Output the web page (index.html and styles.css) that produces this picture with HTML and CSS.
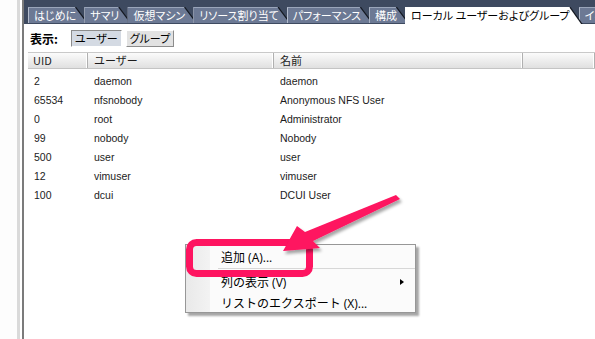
FILE: index.html
```html
<!DOCTYPE html>
<html lang="ja">
<head>
    <meta charset="UTF-8">
    <title>ローカル ユーザーおよびグループ</title>
    <link rel="stylesheet" href="styles.css">
</head>
<body>

    <div class="window">
        <!-- left pane edge -->
        <div class="sidebar"></div>

        <div class="main">
            <!-- tab strip -->
            <div class="tabbar">
                <div class="tab"><span class="face">はじめに</span></div>
                <div class="tab"><span class="face">サマリ</span></div>
                <div class="tab"><span class="face">仮想マシン</span></div>
                <div class="tab"><span class="face">リソース割り当て</span></div>
                <div class="tab"><span class="face">パフォーマンス</span></div>
                <div class="tab"><span class="face">構成</span></div>
                <div class="tab active"><span class="face">ローカル ユーザーおよびグループ</span></div>
                <div class="tab"><span class="face">イベ</span></div>
            </div>

            <div class="content">
                <div class="toolbar">
                    <span class="view-label">表示:</span>
                    <button class="view-btn pressed">ユーザー</button>
                    <button class="view-btn">グループ</button>
                </div>

                <div class="grid">
                    <div class="grid-head">
                        <div class="col">UID</div>
                        <div class="col">ユーザー</div>
                        <div class="col">名前</div>
                        <div class="col"></div>
                    </div>
                    <div class="grid-body">
                        <div class="row"><span>2</span><span>daemon</span><span>daemon</span></div>
                        <div class="row"><span>65534</span><span>nfsnobody</span><span>Anonymous NFS User</span></div>
                        <div class="row"><span>0</span><span>root</span><span>Administrator</span></div>
                        <div class="row"><span>99</span><span>nobody</span><span>Nobody</span></div>
                        <div class="row"><span>500</span><span>user</span><span>user</span></div>
                        <div class="row"><span>12</span><span>vimuser</span><span>vimuser</span></div>
                        <div class="row"><span>100</span><span>dcui</span><span>DCUI User</span></div>
                    </div>
                </div>
            </div>
        </div>

        <!-- right-click menu -->
        <div class="context-menu">
            <div class="menu-item">追加 (A)...</div>
            <div class="menu-sep"></div>
            <div class="menu-item">列の表示 (V)<i class="submenu-arrow"></i></div>
            <div class="menu-item">リストのエクスポート (X)...</div>
        </div>

        <!-- annotation: highlight box and arrow -->
        <svg class="annotation" width="595" height="339" viewBox="0 0 595 339">
            <defs>
                <filter id="shadow" x="-20%" y="-20%" width="140%" height="160%">
                    <feDropShadow dx="2" dy="3" stdDeviation="1.5" flood-color="#000" flood-opacity="0.35"/>
                </filter>
            </defs>
            <rect x="189.5" y="242.5" width="120" height="31" rx="7" fill="none" stroke="#fe1460" stroke-width="7"/>
            <polygon points="283,251 297,226 305,232 396,195 400,199 313,241 320,248" fill="#fe1460" filter="url(#shadow)"/>
        </svg>
    </div>

</body>
</html>
```

FILE: styles.css
```css
body {
    margin: 0;
    background: #fff;
    font-family: "Liberation Sans", Arial, "Noto Sans CJK JP", sans-serif;
}
.window {
    position: relative;
    display: flex;
    width: 595px;
    height: 339px;
    overflow: hidden;
}
.sidebar {
    width: 24px;
    flex-shrink: 0;
    background: linear-gradient(to right, #fdfdfd 0 17px, #dadada 17px 20px, #fff 20px 22px, #7b7b7b 22px 24px);
}
.main {
    flex: 1;
    min-width: 0;
}

/* tabs */
.tabbar {
    display: flex;
    align-items: flex-end;
    height: 24px;
    padding: 0 0 1px 4px;
    background: #3e4a60;
    box-sizing: border-box;
    white-space: nowrap;
    overflow: hidden;
}
.tab {
    position: relative;
    height: 16px;
    margin-right: -4px;
    background: #141820;
    clip-path: polygon(0 0, calc(100% - 12px) 0, 100% 100%, 0 100%);
    flex-shrink: 0;
}
.tab .face {
    display: block;
    height: 100%;
    box-sizing: border-box;
    padding: 0 12px 0 5px;
    background: #6c7994;
    border-top: 1px solid #9aa5ba;
    border-left: 1px solid #b3bccc;
    color: #fff;
    font-family: "Noto Sans CJK JP", sans-serif;
    font-size: 11px;
    font-feature-settings: "palt";
    line-height: 15px;
    clip-path: polygon(0 0, calc(100% - 13.5px) 0, calc(100% - 1.5px) 100%, 0 100%);
}
.tab.active {
    height: 17px;
    margin-bottom: -1px;
    z-index: 2;
}
.tab.active .face {
    padding-right: 13px;
    background: #fff;
    border-color: #fff;
    color: #000;
}

/* content */
.content {
    padding-left: 4px;
}
.toolbar {
    display: flex;
    align-items: center;
    height: 28px;
    padding-left: 2px;
}
.view-label {
    font-family: "Noto Sans CJK JP", sans-serif;
    font-weight: bold;
    font-size: 12px;
    margin-right: 13px;
}
.view-btn {
    height: 17px;
    padding: 0 3px;
    margin-right: 4px;
    font-family: "Noto Sans CJK JP", sans-serif;
    font-size: 11px;
    font-feature-settings: "palt";
    line-height: 13px;
    color: #000;
    background: #e2e2e2;
    border: 1px solid;
    border-color: #fff #8c8c8c #8c8c8c #fff;
}
.view-btn.pressed {
    background: #d4dae3;
    border-color: #8c8c8c #fff #fff #8c8c8c;
}

.grid {
    font-size: 10.5px;
    color: #1c1c1c;
}
.grid-head {
    display: grid;
    grid-template-columns: 60px 186px 249px 1fr;
    height: 17px;
    border-top: 1px solid #c9c9c9;
    border-bottom: 1px solid #c4c4c4;
    background: linear-gradient(#fbfbfb, #e0e0e0);
    box-sizing: border-box;
}
.grid-head .col {
    padding-left: 5px;
    border-right: 1px solid #b0b0b0;
    box-shadow: inset -1px 0 #fff;
    font-family: "Noto Sans CJK JP", sans-serif;
    font-size: 11px;
    line-height: 15px;
}
.grid-head .col:nth-child(2),
.grid-head .col:nth-child(3) {
    padding-left: 6px;
}
.grid-body {
    padding-top: 3px;
}
.row {
    display: grid;
    grid-template-columns: 60px 186px 249px;
    height: 19px;
    line-height: 19px;
}
.row span {
    padding-left: 6px;
}

/* context menu */
.context-menu {
    position: absolute;
    left: 185px;
    top: 244px;
    width: 231px;
    height: 69px;
    box-sizing: border-box;
    border: 1px solid #979797;
    background: linear-gradient(to right, #e9e9e9 0, #f3f3f3 24px, #fbfbfb 24px);
    box-shadow: 3px 3px 2px rgba(0, 0, 0, 0.35);
    font-family: "Open Sans", "Noto Sans CJK JP", sans-serif;
    font-size: 12px;
    color: #000;
}
.menu-item {
    display: flex;
    align-items: center;
    justify-content: space-between;
    height: 21px;
    padding: 0 11px 0 35px;
}
.menu-item:first-child {
    height: 23px;
}
.menu-sep {
    height: 1px;
    margin: 0 0 2px 32px;
    background: #d7d7d7;
}
.submenu-arrow {
    width: 0;
    height: 0;
    border-left: 4px solid #000;
    border-top: 3.5px solid transparent;
    border-bottom: 3.5px solid transparent;
}

.annotation {
    position: absolute;
    left: 0;
    top: 0;
    pointer-events: none;
}
```
